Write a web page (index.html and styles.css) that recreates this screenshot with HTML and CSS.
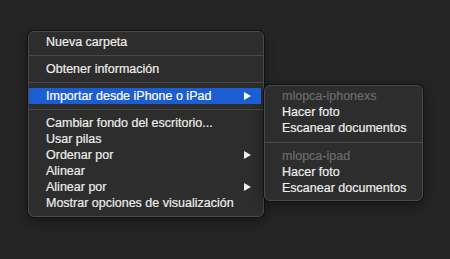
FILE: index.html
```html
<!DOCTYPE html>
<html lang="es">
<head>
    <meta charset="UTF-8">
    <title>Menú contextual</title>
    <link rel="stylesheet" href="styles.css">
</head>
<body>
    <div class="desktop">
        <ul class="menu main-menu">
            <li class="item">Nueva carpeta</li>
            <li class="separator"></li>
            <li class="item">Obtener información</li>
            <li class="separator"></li>
            <li class="item selected has-sub">Importar desde iPhone o iPad <span class="arrow"></span></li>
            <li class="separator"></li>
            <li class="item">Cambiar fondo del escritorio...</li>
            <li class="item">Usar pilas</li>
            <li class="item has-sub">Ordenar por <span class="arrow"></span></li>
            <li class="item">Alinear</li>
            <li class="item has-sub">Alinear por <span class="arrow"></span></li>
            <li class="item">Mostrar opciones de visualización</li>
        </ul>

        <ul class="menu sub-menu">
            <li class="item header">mlopca-iphonexs</li>
            <li class="item">Hacer foto</li>
            <li class="item">Escanear documentos</li>
            <li class="separator"></li>
            <li class="item header">mlopca-ipad</li>
            <li class="item">Hacer foto</li>
            <li class="item">Escanear documentos</li>
        </ul>
    </div>
</body>
</html>
```

FILE: styles.css
```css
body {
    margin: 0;
    background-color: #252525;
    font-family: "Liberation Sans", Arial, sans-serif;
    font-size: 12.5px;
    color: #ededed;
    -webkit-text-stroke: 0.2px;
    height: 259px;
    overflow: hidden;
}

.desktop {
    display: flex;
    align-items: flex-start;
    padding: 31px 0 0 28px;
}

.menu {
    list-style: none;
    margin: 0;
    padding: 2px 0 5px;
    background-color: #2d2d2d;
    border: 1px solid #4a4a4a;
    border-radius: 6px;
    box-shadow: 0 0 0 1px #121212, 0 4px 14px rgba(0, 0, 0, 0.45);
    box-sizing: border-box;
}

.main-menu {
    width: 236px;
}

.sub-menu {
    width: 159px;
    margin-top: 54px;
    padding-bottom: 4px;
}

.item {
    position: relative;
    height: 16px;
    line-height: 16px;
    padding: 0 17px;
    white-space: nowrap;
}

.main-menu .item {
    margin: 0 2px 0 0;
}

.selected {
    background-color: #1c5ed1;
    color: #ffffff;
}

.header {
    color: #6c6c6c;
}

.separator {
    height: 1px;
    margin: 5px 0;
    background-color: #484848;
}

.sub-menu .separator {
    margin: 6px 0 5px;
}

.arrow {
    position: absolute;
    right: 10px;
    top: 4px;
    width: 0;
    height: 0;
    border-top: 4px solid transparent;
    border-bottom: 4px solid transparent;
    border-left: 7px solid #ededed;
}

.selected .arrow {
    border-left-color: #ffffff;
}
```
